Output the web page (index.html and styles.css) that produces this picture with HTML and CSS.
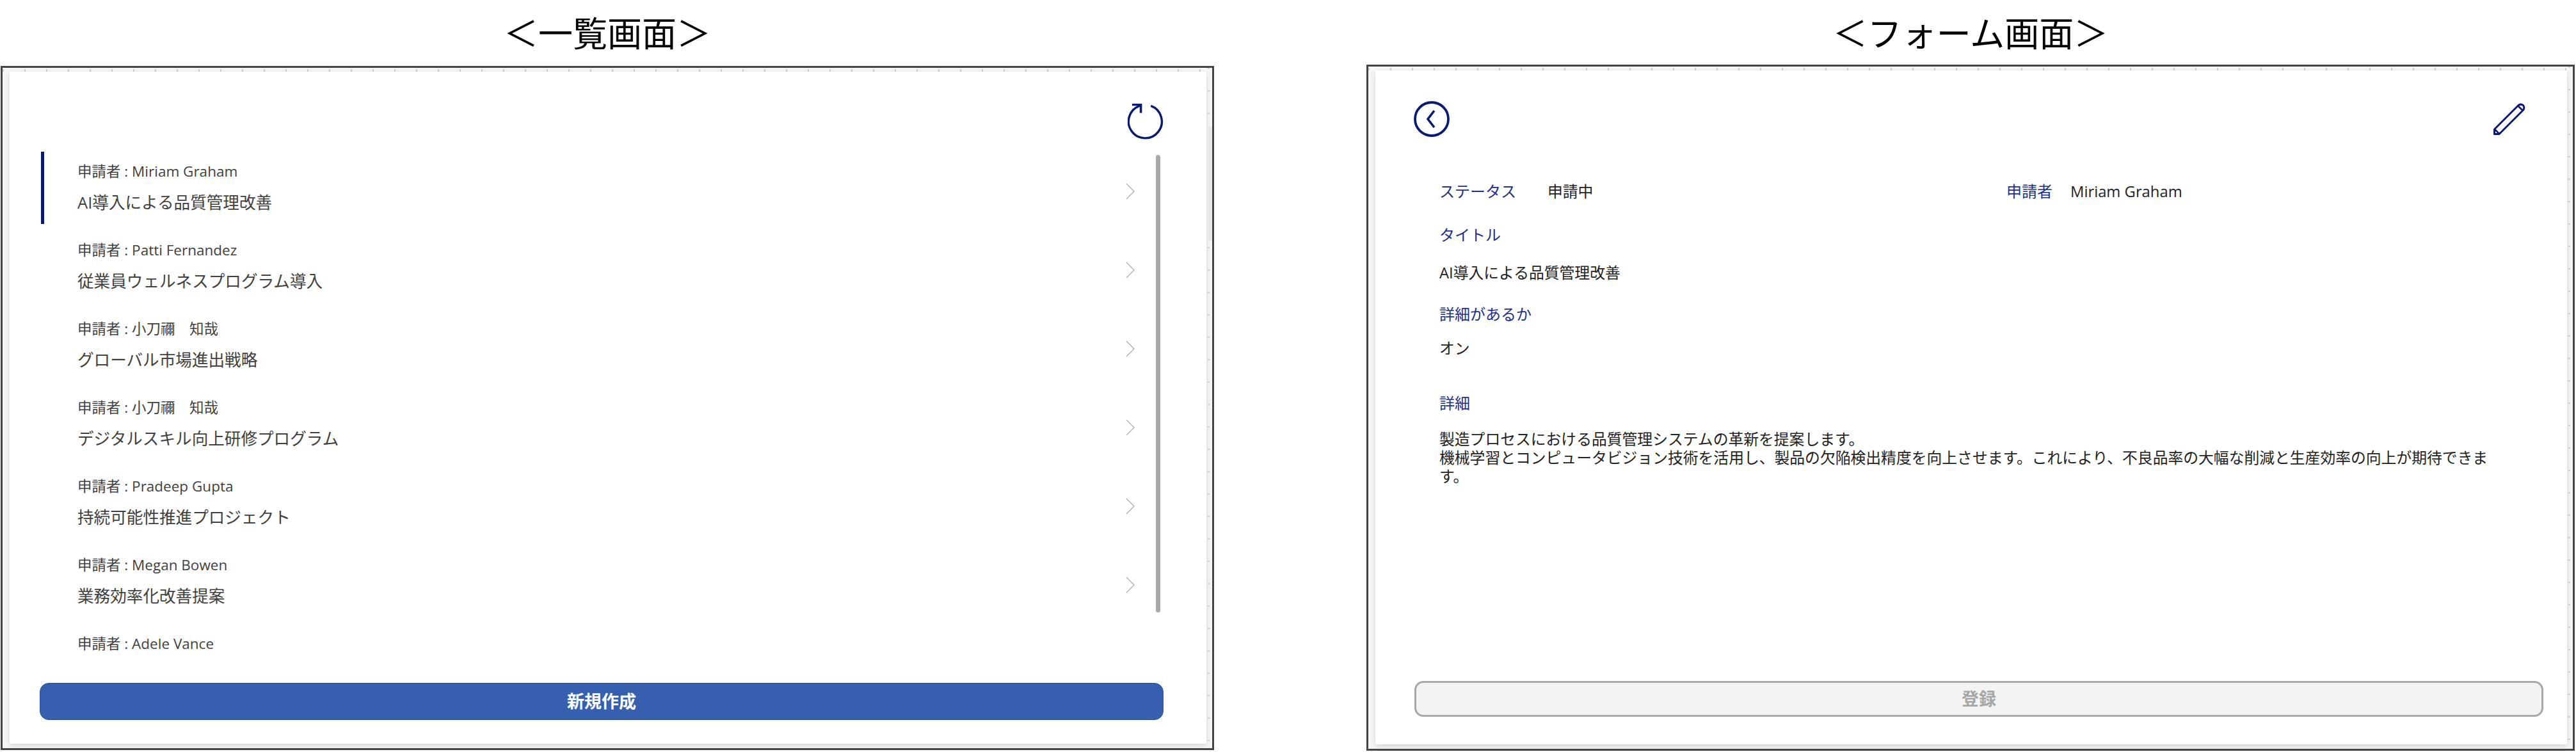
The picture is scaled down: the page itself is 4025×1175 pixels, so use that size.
FILE: index.html
```html
<!DOCTYPE html>
<html lang="ja">
<head>
<meta charset="utf-8">
<title>画面</title>
<link rel="stylesheet" href="styles.css">
</head>
<body>
<main class="page">
  <section class="screen screen-list">
    <h1 class="screen-title">＜一覧画面＞</h1>
    <div class="frame frame-list">
      <div class="canvas canvas-list">
        <div class="thumb"></div>
        <div class="toolbar">
          <svg class="icon" width="56" height="56" viewBox="0 0 56 56"><path d="M36.2 3.4A26 26 0 1 1 20.4 2.8" fill="none" stroke="#0a1a73" stroke-width="3.4"/><path d="M7 1.5H20.6V14.5" fill="none" stroke="#0a1a73" stroke-width="3.6"/></svg>
        </div>
        <ul class="list">
          <li class="item selected"><div class="item-text"><p class="item-name">申請者 : Miriam Graham</p><p class="item-title">AI導入による品質管理改善</p></div><svg class="chev" width="14" height="26" viewBox="0 0 14 26"><path d="M1 1L13 13L1 25" fill="none" stroke="#b0b0b0" stroke-width="1.4"/></svg></li>
          <li class="item"><div class="item-text"><p class="item-name">申請者 : Patti Fernandez</p><p class="item-title">従業員ウェルネスプログラム導入</p></div><svg class="chev" width="14" height="26" viewBox="0 0 14 26"><path d="M1 1L13 13L1 25" fill="none" stroke="#b0b0b0" stroke-width="1.4"/></svg></li>
          <li class="item"><div class="item-text"><p class="item-name">申請者 : 小刀禰　知哉</p><p class="item-title">グローバル市場進出戦略</p></div><svg class="chev" width="14" height="26" viewBox="0 0 14 26"><path d="M1 1L13 13L1 25" fill="none" stroke="#b0b0b0" stroke-width="1.4"/></svg></li>
          <li class="item"><div class="item-text"><p class="item-name">申請者 : 小刀禰　知哉</p><p class="item-title">デジタルスキル向上研修プログラム</p></div><svg class="chev" width="14" height="26" viewBox="0 0 14 26"><path d="M1 1L13 13L1 25" fill="none" stroke="#b0b0b0" stroke-width="1.4"/></svg></li>
          <li class="item"><div class="item-text"><p class="item-name">申請者 : Pradeep Gupta</p><p class="item-title">持続可能性推進プロジェクト</p></div><svg class="chev" width="14" height="26" viewBox="0 0 14 26"><path d="M1 1L13 13L1 25" fill="none" stroke="#b0b0b0" stroke-width="1.4"/></svg></li>
          <li class="item"><div class="item-text"><p class="item-name">申請者 : Megan Bowen</p><p class="item-title">業務効率化改善提案</p></div><svg class="chev" width="14" height="26" viewBox="0 0 14 26"><path d="M1 1L13 13L1 25" fill="none" stroke="#b0b0b0" stroke-width="1.4"/></svg></li>
          <li class="item"><div class="item-text"><p class="item-name">申請者 : Adele Vance</p></div></li>
        </ul>
        <button class="btn btn-primary" type="button">新規作成</button>
      </div>
    </div>
  </section>

  <section class="screen screen-form">
    <h1 class="screen-title">＜フォーム画面＞</h1>
    <div class="frame frame-form">
      <div class="canvas canvas-form">
        <div class="form-toolbar">
          <svg class="icon" width="56" height="56" viewBox="0 0 56 56"><circle cx="28" cy="28" r="26" fill="none" stroke="#0a1a73" stroke-width="3.8"/><path d="M32 15L22 28L32 41" fill="none" stroke="#0a1a73" stroke-width="3.6"/></svg>
          <svg class="icon icon-pencil" width="50" height="50" viewBox="0 0 50 50"><path d="M1.5 48.5V41L39 3.5Q42.5 .8 46.5 3.5Q49.2 7.5 46.5 11L9 48.5Z" fill="none" stroke="#0a1a73" stroke-width="3" stroke-linejoin="round"/><path d="M2 41L9 48M38.5 4.5L45.5 11.5" fill="none" stroke="#0a1a73" stroke-width="2.6"/></svg>
        </div>
        <div class="form-body">
          <div class="form-row">
            <div class="pair pair-status"><span class="label">ステータス</span><span class="value">申請中</span></div>
            <div class="pair pair-applicant"><span class="label">申請者</span><span class="value">Miriam Graham</span></div>
          </div>
          <p class="label field-title">タイトル</p>
          <p class="value field-title-value">AI導入による品質管理改善</p>
          <p class="label field-has">詳細があるか</p>
          <p class="value field-has-value">オン</p>
          <p class="label field-detail">詳細</p>
          <p class="value detail-text">製造プロセスにおける品質管理システムの革新を提案します。<br>機械学習とコンピュータビジョン技術を活用し、製品の欠陥検出精度を向上させます。これにより、不良品率の大幅な削減と生産効率の向上が期待できます。</p>
        </div>
        <button class="btn btn-disabled" type="button">登録</button>
      </div>
    </div>
  </section>
</main>
</body>
</html>
```

FILE: styles.css
```css
* { box-sizing: border-box; }
html, body { margin: 0; padding: 0; background: #fff; }
body {
  width: 4025px;
  height: 1175px;
  overflow: hidden;
  font-family: "Open Sans", "Noto Sans CJK JP", sans-serif;
  color: #222;
}
p, h1, ul { margin: 0; padding: 0; }
ul { list-style: none; }

.page { display: flex; padding-left: 1px; gap: 238px; }
.screen { display: flex; flex-direction: column; }
.screen-list { width: 1896px; }
.screen-form { width: 1888px; }

.screen-title {
  font-family: "Noto Sans CJK JP", sans-serif;
  font-size: 54px;
  font-weight: 400;
  line-height: 60px;
  text-align: center;
  color: #000;
  margin-top: 20px;
}
.screen-list .frame { margin-top: 23px; height: 1069px; }
.screen-form .frame { margin-top: 21px; height: 1072px; }

.frame {
  border: 3px solid #444;
  padding: 6px 9px 7px 11px;
  background-color: #f6f6f6;
  background-image:
    repeating-linear-gradient(90deg, #cfcfcf 0 2px, transparent 2px 34px),
    repeating-linear-gradient(180deg, #d4d4d4 0 2px, transparent 2px 35px);
  background-size: 100% 4px, 3px 100%;
  background-position: 0 2px, right 4px top 0;
  background-repeat: no-repeat;
}
.canvas {
  position: relative;
  height: 100%;
  background: #fff;
  box-shadow: 0 3px 8px rgba(0, 0, 0, .14);
}

.frame-list .canvas::after {
  content: "";
  position: absolute;
  right: -9px;
  top: 86px;
  width: 9px;
  height: 178px;
  background: #e9e9e9;
}

.toolbar { display: flex; justify-content: flex-end; padding: 50px 67px 0 0; height: 125px; }
.icon { display: block; flex: none; }

.thumb {
  position: absolute;
  left: 1791px;
  top: 130px;
  width: 7px;
  height: 715px;
  border-radius: 4px;
  background: #a9a9a9;
}

.list { margin-left: 49px; margin-right: 68px; height: 795px; overflow: hidden; }
.item {
  display: flex;
  align-items: center;
  height: 113px;
  margin-bottom: 10px;
  padding-left: 52px;
  border-left: 5px solid transparent;
  padding-right: 44px;
}
.item.selected { border-left-color: #0a1a73; }
.item-text { flex: 1; align-self: flex-start; }
.item-name { font-size: 22.5px; line-height: 30px; padding-top: 16px; color: #404040; }
.item-title { font-size: 25.6px; line-height: 34px; margin-top: 17px; color: #404040; }
.chev { flex: none; margin-top: 11px; }

.btn {
  display: block;
  font-family: "Open Sans", "Noto Sans CJK JP", sans-serif;
  font-weight: 700;
  font-size: 27px;
  padding: 0 0 3px;
}
.btn-primary {
  margin: 35px 0 0 47px;
  width: 1756px;
  height: 58px;
  border: 1px solid #2f5199;
  border-radius: 14px;
  background: #365fb0;
  color: #fff;
}

.form-toolbar { display: flex; justify-content: space-between; align-items: flex-start; padding: 48px 65px 0 60px; height: 168px; }
.icon-pencil { margin-top: 3px; }
.form-body { padding-left: 100px; padding-right: 115px; height: 786px; }
.form-row { display: flex; height: 42px; align-items: center; }
.pair { display: flex; align-items: center; }
.pair-status { width: 886px; }
.pair-status .label { width: 169px; }
.pair-applicant .label { width: 100px; }
.label { font-size: 24px; line-height: 34px; color: #20308c; }
.value { font-size: 23.8px; line-height: 34px; color: #222; }
.field-title { margin-top: 30px; }
.field-title-value { margin-top: 25px; }
.field-has { margin-top: 31px; }
.field-has-value { margin-top: 19px; }
.field-detail { margin-top: 52px; }
.detail-text { margin-top: 25px; line-height: 29px; }

.btn-disabled {
  margin: 0 0 0 61px;
  width: 1764px;
  height: 56px;
  border: 3px solid #a8a8a8;
  border-radius: 14px;
  background: #f3f3f3;
  color: #a6a6a6;
}
```
